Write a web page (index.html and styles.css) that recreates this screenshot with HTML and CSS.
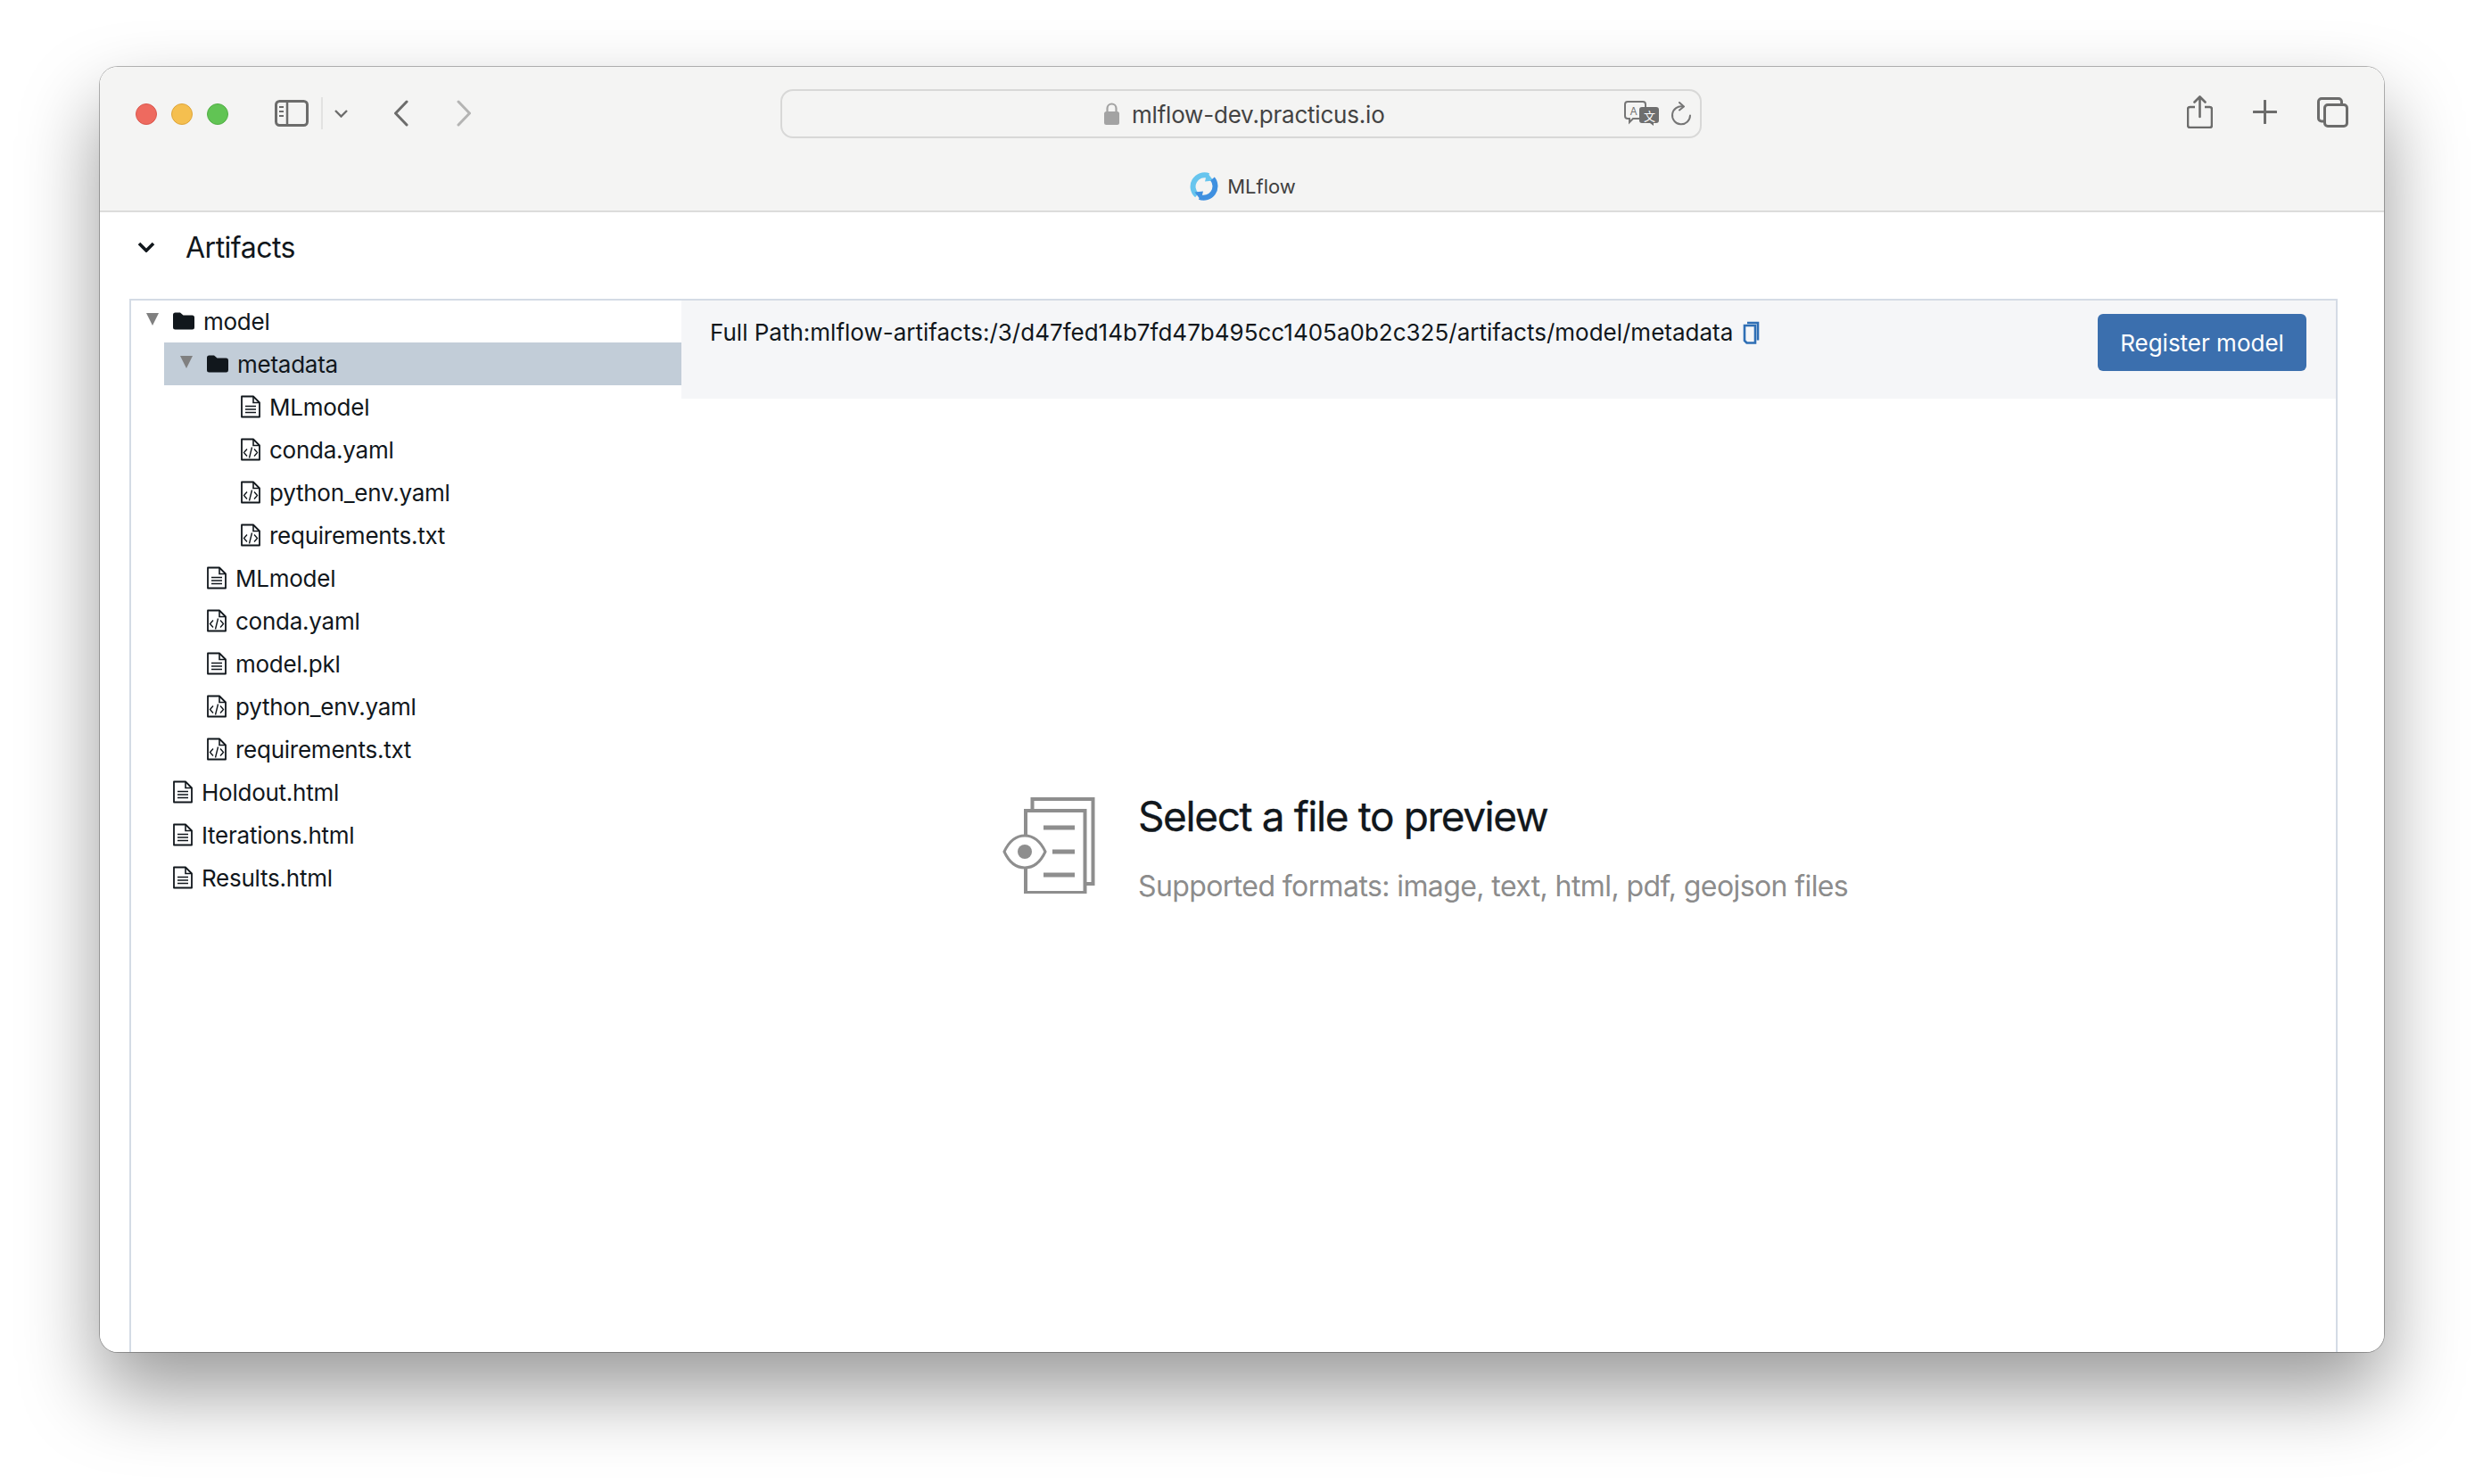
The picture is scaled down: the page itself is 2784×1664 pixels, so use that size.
FILE: index.html
```html
<!DOCTYPE html>
<html lang="en">
<head>
  <meta charset="UTF-8" />
  <title>MLflow</title>
  <link rel="stylesheet" href="styles.css">
</head>
<body>

  <svg class="defs" width="0" height="0">
    <symbol id="file-text" viewBox="0 0 22 26">
      <path d="M1 1.500h13l7 7v16H1z" fill="none" stroke="#11171c" stroke-width="1.800" stroke-linejoin="round"/>
      <path d="M14 1.500v7h7" fill="none" stroke="#11171c" stroke-width="1.600"/>
      <path d="M5 12.500h12M5 16h12M5 19.500h12" stroke="#11171c" stroke-width="1.600"/>
    </symbol>
    <symbol id="file-code" viewBox="0 0 22 26">
      <path d="M1 1.500h13l7 7v16H1z" fill="none" stroke="#11171c" stroke-width="1.800" stroke-linejoin="round"/>
      <path d="M14 1.500v7h7" fill="none" stroke="#11171c" stroke-width="1.600"/>
      <path d="M7 12.500l-3.500 4 3.500 4M15 12.500l3.500 4-3.500 4M12.500 10.500l-3 12" fill="none" stroke="#11171c" stroke-width="1.400"/>
    </symbol>
    <symbol id="folder" viewBox="0 0 24 20">
      <path d="M0 3a2.500 2.500 0 0 1 2.500-2.500h5.500l3.500 3h10a2.500 2.500 0 0 1 2.500 2.500v11a2.500 2.500 0 0 1-2.500 2.500h-19a2.500 2.500 0 0 1-2.500-2.500z" fill="#11171c"/>
    </symbol>
  </svg>

  <div class="window">
    <div class="titlebar">
      <div class="toolbar">
        <span class="light red"></span>
        <span class="light yellow"></span>
        <span class="light green"></span>

        <svg class="sidebar-btn" width="38" height="30" viewBox="0 0 38 30">
          <rect x="1.500" y="1.500" width="35" height="27" rx="4" fill="none" stroke="#6c6c6b" stroke-width="3"/>
          <path d="M14 2v26" stroke="#6c6c6b" stroke-width="2.500"/>
          <path d="M5 8h5M5 13h5M5 18h5" stroke="#6c6c6b" stroke-width="2"/>
        </svg>
        <span class="sep"></span>
        <svg class="chevron-small" width="15" height="9" viewBox="0 0 15 9">
          <path d="M1 1l6.500 6.500L14 1" fill="none" stroke="#6c6c6b" stroke-width="2.400"/>
        </svg>
        <svg class="nav-back" width="17" height="30" viewBox="0 0 17 30">
          <path d="M15 2L2.500 15 15 28" fill="none" stroke="#6c6c6b" stroke-width="3" stroke-linecap="round" stroke-linejoin="round"/>
        </svg>
        <svg class="nav-forward" width="17" height="30" viewBox="0 0 17 30">
          <path d="M2 2l12.500 13L2 28" fill="none" stroke="#b4b4b3" stroke-width="3" stroke-linecap="round" stroke-linejoin="round"/>
        </svg>

        <div class="urlbar">
          <svg class="lock" width="19" height="25" viewBox="0 0 19 25">
            <path d="M4.500 11V6.500a5 5 0 0 1 10 0V11" fill="none" stroke="#a3a3a3" stroke-width="2.200"/>
            <rect x="1" y="10" width="17" height="15" rx="2.500" fill="#a3a3a3"/>
          </svg>
          <span class="address">mlflow-dev.practicus.io</span>
          <svg class="translate" width="40" height="28" viewBox="0 0 40 28">
            <path d="M4 1h17a3 3 0 0 1 3 3v13a3 3 0 0 1-3 3H10l-4 4v-4H4a3 3 0 0 1-3-3V4a3 3 0 0 1 3-3z" fill="#f4f4f3" stroke="#767676" stroke-width="2"/>
            <text x="6.500" y="15.500" class="translate-a">A</text>
            <path d="M20 7h16a3 3 0 0 1 3 3v12a3 3 0 0 1-3 3h-3v3l-4-3h-9a3 3 0 0 1-3-3V10a3 3 0 0 1 3-3z" fill="#6e6e6e"/>
            <text x="22" y="21.500" class="translate-zh">文</text>
          </svg>
          <svg class="reload" width="24" height="27" viewBox="0 0 24 27">
            <path d="M14 5.500A10 10 0 1 0 22 15.500" fill="none" stroke="#767676" stroke-width="2" stroke-linecap="round"/>
            <path d="M10 1l5 4.500-5 4" fill="none" stroke="#767676" stroke-width="2" stroke-linecap="round" stroke-linejoin="round"/>
          </svg>
        </div>

        <div class="toolbar-right">
          <svg width="29" height="37" viewBox="0 0 29 37">
            <path d="M9 13H3.500a2.500 2.500 0 0 0-2.500 2.500v18a2.500 2.500 0 0 0 2.500 2.500h22a2.500 2.500 0 0 0 2.500-2.500v-18a2.500 2.500 0 0 0-2.500-2.500H20" fill="none" stroke="#6c6c6b" stroke-width="2.600"/>
            <path d="M14.500 24V2M8.500 7.500l6-6 6 6" fill="none" stroke="#6c6c6b" stroke-width="2.600" stroke-linecap="round" stroke-linejoin="round"/>
          </svg>
          <svg width="27" height="27" viewBox="0 0 27 27">
            <path d="M13.500 1v25M1 13.500h25" stroke="#6c6c6b" stroke-width="3" stroke-linecap="round"/>
          </svg>
          <svg width="35" height="34" viewBox="0 0 35 34">
            <path d="M8 27H5a3.500 3.500 0 0 1-3.500-3.500V5A3.500 3.500 0 0 1 5 1.500h19A3.500 3.500 0 0 1 27.500 5v3" fill="none" stroke="#6c6c6b" stroke-width="3"/>
            <rect x="8.500" y="8.500" width="25" height="24" rx="3.500" fill="none" stroke="#6c6c6b" stroke-width="3"/>
          </svg>
        </div>
      </div>

      <div class="tabrow">
        <svg class="mlflow-logo" width="32" height="32" viewBox="0 0 32 32">
          <path d="M8 26A13 13 0 0 1 21 4" fill="none" stroke="#67c5ee" stroke-width="6"/>
          <path d="M19.500 0.500L26.500 9.500 17 10.500z" fill="#67c5ee"/>
          <path d="M25.500 7.500A13 13 0 0 1 11 28" fill="none" stroke="#3f90e0" stroke-width="6"/>
          <path d="M12.500 31.500L5.500 22.500 15 21.500z" fill="#3f90e0"/>
        </svg>
        <span class="tab-title">MLflow</span>
      </div>
    </div>

    <div class="section-head">
      <svg width="20" height="12" viewBox="0 0 20 12">
        <path d="M2 2l8 8 8-8" fill="none" stroke="#11171c" stroke-width="3.600"/>
      </svg>
      <span class="section-title">Artifacts</span>
    </div>

    <div class="artifact-panel">
      <ul class="tree">
        <li>
          <div class="row folder-row"><span class="toggle"></span><svg class="folder-icon"><use href="#folder"/></svg><span>model</span></div>
          <ul class="tree nested">
            <li>
              <div class="row folder-row active"><span class="toggle"></span><svg class="folder-icon"><use href="#folder"/></svg><span>metadata</span></div>
              <ul class="tree nested">
                <li><div class="row file-row deep"><svg class="file-icon"><use href="#file-text"/></svg><span>MLmodel</span></div></li>
                <li><div class="row file-row deep"><svg class="file-icon"><use href="#file-code"/></svg><span>conda.yaml</span></div></li>
                <li><div class="row file-row deep"><svg class="file-icon"><use href="#file-code"/></svg><span>python_env.yaml</span></div></li>
                <li><div class="row file-row deep"><svg class="file-icon"><use href="#file-code"/></svg><span>requirements.txt</span></div></li>
              </ul>
            </li>
            <li><div class="row file-row"><svg class="file-icon"><use href="#file-text"/></svg><span>MLmodel</span></div></li>
            <li><div class="row file-row"><svg class="file-icon"><use href="#file-code"/></svg><span>conda.yaml</span></div></li>
            <li><div class="row file-row"><svg class="file-icon"><use href="#file-text"/></svg><span>model.pkl</span></div></li>
            <li><div class="row file-row"><svg class="file-icon"><use href="#file-code"/></svg><span>python_env.yaml</span></div></li>
            <li><div class="row file-row"><svg class="file-icon"><use href="#file-code"/></svg><span>requirements.txt</span></div></li>
          </ul>
        </li>
        <li><div class="row file-row"><svg class="file-icon"><use href="#file-text"/></svg><span>Holdout.html</span></div></li>
        <li><div class="row file-row"><svg class="file-icon"><use href="#file-text"/></svg><span>Iterations.html</span></div></li>
        <li><div class="row file-row"><svg class="file-icon"><use href="#file-text"/></svg><span>Results.html</span></div></li>
      </ul>

      <div class="preview">
        <div class="path-bar">
          <div class="full-path">
            <span>Full Path:mlflow-artifacts:/3/d47fed14b7fd47b495cc1405a0b2c325/artifacts/model/metadata</span>
            <svg width="19" height="26" viewBox="0 0 19 26">
              <path d="M5 2h12v19.500" fill="none" stroke="#2f6fb5" stroke-width="2.600"/>
              <path d="M2 5h12v19.500H4.500L2 22z" fill="none" stroke="#2f6fb5" stroke-width="2.600"/>
            </svg>
          </div>
          <button class="register-btn">Register model</button>
        </div>

        <div class="empty-state">
          <svg class="empty-icon" width="104" height="108" viewBox="0 0 104 108">
            <path d="M33.500 13V2h68v95h-9" fill="none" stroke="#8e8e8e" stroke-width="4"/>
            <path d="M26 15h66.500v92H26z" fill="#fff" stroke="#8e8e8e" stroke-width="4"/>
            <path d="M46 34h35M56 61h25M46 87h35" stroke="#8e8e8e" stroke-width="5"/>
            <path d="M2 61C8 48 16 43 25 43s17 5 23 18C42 74 34 79 25 79S8 74 2 61z" fill="#fff" stroke="#8e8e8e" stroke-width="3"/>
            <circle cx="25" cy="61" r="8" fill="#8e8e8e"/>
          </svg>
          <div class="empty-text">
            <h2>Select a file to preview</h2>
            <p>Supported formats: image, text, html, pdf, geojson files</p>
          </div>
        </div>
      </div>
    </div>
  </div>

</body>
</html>
```

FILE: styles.css
```css
* {
  box-sizing: border-box;
}
html, body {
  height: 100%;
}
body {
  margin: 0;
  padding: 75px 111px 148px 112px;
  background: #fff;
  font-family: 'Inter', 'Liberation Sans', sans-serif;
  color: #11171c;
  overflow: hidden;
}
.defs {
  position: absolute;
}
.window {
  position: relative;
  height: 100%;
  display: flex;
  flex-direction: column;
  background: #fff;
  border-radius: 20px;
  overflow: hidden;
}
body::before {
  content: "";
  position: absolute;
  left: 112px;
  top: 75px;
  width: 2561px;
  height: 1441px;
  border-radius: 20px;
  box-shadow: 0 0 0 1px rgba(0, 0, 0, 0.28), 0 44px 88px rgba(0, 0, 0, 0.4);
}

/* browser chrome */
.titlebar {
  flex: none;
  background: #f4f4f3;
  border-bottom: 2px solid #dcdcdb;
}
.toolbar {
  height: 104px;
  display: flex;
  align-items: center;
  padding: 0 40px 0 40px;
}
.light {
  width: 24px;
  height: 24px;
  margin: 2px 16px 0 0;
  border-radius: 50%;
  border: 1px solid;
}
.light.red { background: #ee6a5f; border-color: #d9574d; }
.light.yellow { background: #f5bf4f; border-color: #dea53a; }
.light.green { background: #61c454; border-color: #52ad46; }
.sidebar-btn {
  margin-left: 36px;
}
.sep {
  width: 2px;
  height: 36px;
  margin-left: 14px;
  background: #e2e2e1;
}
.chevron-small {
  margin-left: 13px;
}
.nav-back {
  margin-left: 51px;
}
.nav-forward {
  margin-left: 54px;
}
.urlbar {
  width: 1033px;
  height: 55px;
  margin-left: 346px;
  padding: 0 9px 0 360px;
  display: flex;
  align-items: center;
  border: 2px solid #d8d8d7;
  border-radius: 14px;
}
.address {
  margin: 2px 0 0 13px;
  font-size: 26px;
  letter-spacing: -0.2px;
  color: #434343;
}
.translate {
  margin-left: auto;
}
.translate-a {
  font-size: 12px;
  fill: #767676;
}
.translate-zh {
  font-family: 'Noto Sans CJK SC', sans-serif;
  font-size: 13px;
  fill: #fff;
}
.reload {
  margin-left: 12px;
}
.toolbar-right {
  margin: -3px 0 0 auto;
  display: flex;
  align-items: center;
  gap: 45px;
}
.tabrow {
  height: 57px;
  padding: 2px 0 0 2px;
  display: flex;
  align-items: center;
  justify-content: center;
  gap: 10px;
}
.tab-title {
  font-size: 22px;
  color: #404040;
}

/* artifacts section */
.section-head {
  flex: none;
  height: 78px;
  padding-left: 42px;
  display: flex;
  align-items: center;
  gap: 34px;
}
.section-title {
  font-size: 32px;
  letter-spacing: -0.5px;
}
.artifact-panel {
  flex: 1;
  min-height: 0;
  display: flex;
  margin: 19px 52px 0 33px;
  border: 2px solid #d4dbe5;
  border-bottom: none;
}
.tree {
  list-style: none;
  margin: 0;
  padding: 0;
}
.artifact-panel > .tree {
  flex: none;
  width: 617px;
  margin-top: -1px;
}
.nested {
  margin-left: 37px;
}
.row {
  height: 48px;
  display: flex;
  align-items: center;
  font-size: 26px;
  letter-spacing: -0.25px;
}
.folder-row {
  padding-left: 17px;
}
.nested .folder-row {
  padding-left: 18px;
}
.folder-row.active {
  background: #c2cdd8;
}
.toggle {
  width: 0;
  height: 0;
  margin-bottom: 4px;
  border-left: 7px solid transparent;
  border-right: 7px solid transparent;
  border-top: 14px solid #808080;
}
.folder-icon {
  width: 24px;
  height: 20px;
  margin: 0 10px 0 16px;
}
.file-row {
  padding-left: 47px;
}
.nested .file-row {
  padding-left: 48px;
}
.nested .file-row.deep {
  padding-left: 49px;
}
.file-icon {
  width: 22px;
  height: 26px;
  margin-right: 10px;
}

/* preview pane */
.preview {
  flex: 1;
  min-width: 0;
  display: flex;
  flex-direction: column;
}
.path-bar {
  height: 110px;
  padding: 15px 33px 0 32px;
  display: flex;
  justify-content: space-between;
  align-items: flex-start;
  background: #f5f6f8;
}
.full-path {
  display: flex;
  align-items: center;
  gap: 11px;
  margin-top: 5px;
  font-size: 26px;
}
.register-btn {
  width: 234px;
  height: 64px;
  padding: 0;
  border: none;
  border-radius: 6px;
  background: #3b6fae;
  color: #fff;
  font-family: inherit;
  font-size: 26px;
}
.empty-state {
  display: flex;
  align-items: flex-start;
  gap: 48px;
  padding: 447px 0 0 360px;
}
.empty-icon {
  flex: none;
}
.empty-text h2 {
  margin: -7px 0 0;
  font-size: 46px;
  font-weight: 400;
  line-height: 56px;
  letter-spacing: -1.4px;
  -webkit-text-stroke: 0.3px #11171c;
}
.empty-text p {
  margin: 29px 0 0;
  font-size: 32px;
  line-height: 44px;
  letter-spacing: -0.6px;
  color: #8c8c8c;
}
```
